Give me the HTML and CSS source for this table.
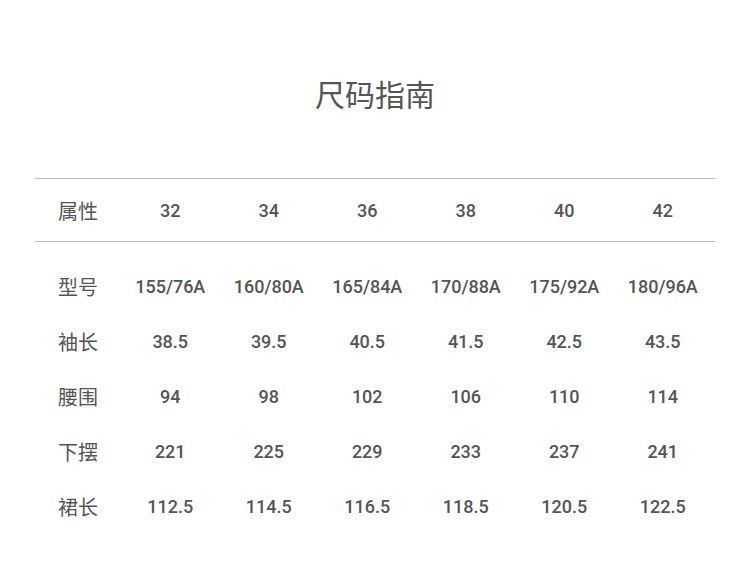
FILE: index.html
```html
<!DOCTYPE html>
<html lang="zh">
<head>
<meta charset="utf-8">
<link rel="stylesheet" href="styles.css">
</head>
<body>
<div class="page">
  <h1 class="title">尺码指南</h1>
  <div class="table">
    <div class="row head">
      <div class="label">属性</div><div>32</div><div>34</div><div>36</div><div>38</div><div>40</div><div>42</div>
    </div>
    <div class="body">
      <div class="row"><div class="label">型号</div><div>155/76A</div><div>160/80A</div><div>165/84A</div><div>170/88A</div><div>175/92A</div><div>180/96A</div></div>
      <div class="row"><div class="label">袖长</div><div>38.5</div><div>39.5</div><div>40.5</div><div>41.5</div><div>42.5</div><div>43.5</div></div>
      <div class="row"><div class="label">腰围</div><div>94</div><div>98</div><div>102</div><div>106</div><div>110</div><div>114</div></div>
      <div class="row"><div class="label">下摆</div><div>221</div><div>225</div><div>229</div><div>233</div><div>237</div><div>241</div></div>
      <div class="row"><div class="label">裙长</div><div>112.5</div><div>114.5</div><div>116.5</div><div>118.5</div><div>120.5</div><div>122.5</div></div>
    </div>
  </div>
</div>
</body>
</html>
```
FILE: styles.css
```css
html, body { margin: 0; padding: 0; background: #fff; }
.page {
  width: 750px;
  height: 566px;
  font-family: Roboto, "Noto Sans CJK SC", sans-serif;
  color: #555;
  padding: 0 35px;
  box-sizing: border-box;
}
.title {
  margin: 0;
  padding-top: 73px;
  height: 178px;
  box-sizing: border-box;
  font-family: "Noto Sans CJK SC", sans-serif;
  font-weight: 400;
  font-size: 30px;
  line-height: 40px;
  text-align: center;
  color: #555;
}
.table { width: 680px; }
.row {
  display: grid;
  grid-template-columns: 86px repeat(6, 98.5px);
  align-items: center;
  height: 55px;
  font-size: 18px;
  font-weight: 500;
  text-align: center;
}
.row .label {
  font-family: "Noto Sans CJK SC", sans-serif;
  font-size: 20px;
  font-weight: 400;
}
.head {
  height: 64px;
  box-sizing: border-box;
  border-top: 1px solid #bdbdbd;
  border-bottom: 1px solid #bdbdbd;
}
.body { padding-top: 17px; }
```
